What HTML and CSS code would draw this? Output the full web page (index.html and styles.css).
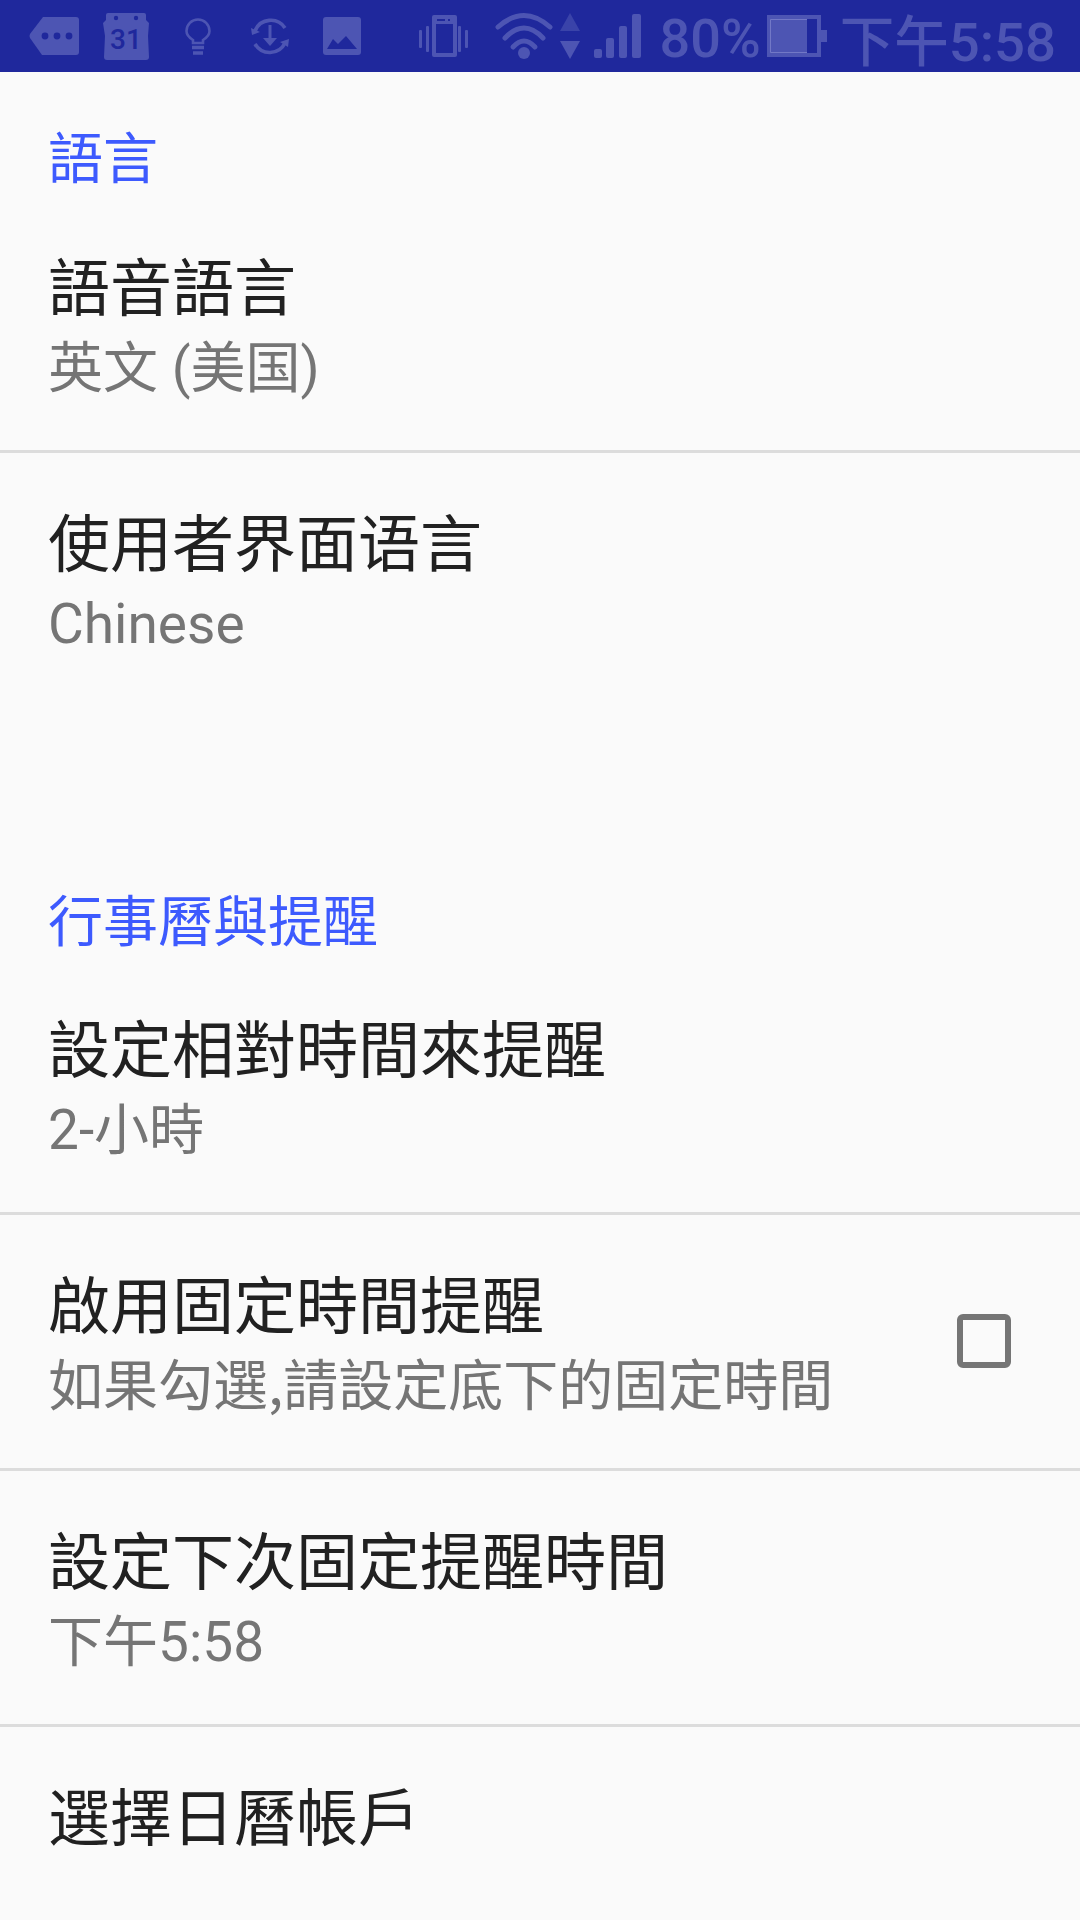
FILE: index.html
```html
<!DOCTYPE html>
<html lang="zh">
<head>
    <meta charset="UTF-8">
    <title>設定</title>
    <link rel="stylesheet" href="styles.css">
</head>
<body>

<div class="statusbar">
    <div class="notify-icons">
        <span class="cell">
            <svg width="50" height="38" viewBox="0 0 50 38"><path d="M14 0h33a3 3 0 0 1 3 3v32a3 3 0 0 1-3 3H13L1 21q-1-2 0-4z" fill="#4d55b3"/><circle cx="16" cy="19" r="3.4" fill="#1f289c"/><circle cx="28" cy="19" r="3.4" fill="#1f289c"/><circle cx="40" cy="19" r="3.4" fill="#1f289c"/></svg>
        </span>
        <span class="cell">
            <span class="calendar">
                <svg width="46" height="47" viewBox="0 0 46 47"><path d="M3 2q0-2 2-2h36q2 0 2 2v5l3 3-1 13 1 21q0 3-3 3H4q-3 0-3-3l1-21L0 10l3-3z" fill="#4d55b3"/><circle cx="13" cy="5" r="2.2" fill="#1f289c"/><circle cx="33" cy="5" r="2.2" fill="#1f289c"/></svg>
                <span class="cal-day">31</span>
            </span>
        </span>
        <span class="cell">
            <svg width="26" height="37" viewBox="0 0 26 37" fill="none" stroke="#4d55b3" stroke-width="2.6"><path d="M8 25v-3C3 19 1.500 16.500 1.500 13a11.500 11.500 0 0 1 23 0c0 3.500-1.500 6-6.500 9v3z"/><path d="M7 29.500h12M8 35h10" stroke-width="3.4"/></svg>
        </span>
        <span class="cell">
            <svg width="38" height="38" viewBox="0 0 38 38" fill="none" stroke="#4d55b3" stroke-width="3.6"><path d="M4 14A17 17 0 0 1 34 11"/><path d="M34 26A17 17 0 0 1 4 27"/><path d="M0 11l1 7 8-3z" fill="#4d55b3" stroke="none"/><path d="M38 22l-1 8-8-5z" fill="#4d55b3" stroke="none"/><path d="M19 8v14" stroke-width="3"/><path d="M12 21h14l-7 8z" fill="#4d55b3" stroke="none"/></svg>
        </span>
        <span class="cell">
            <svg width="38" height="38" viewBox="0 0 38 38"><rect width="38" height="38" rx="3" fill="#4d55b3"/><path d="M4 32l6-10 5 5 8-8 11 13z" fill="#1f289c"/></svg>
        </span>
    </div>
    <div class="system-icons">
        <svg width="49" height="42" viewBox="0 0 49 42" fill="#4d55b3"><rect x="13" width="25" height="42" rx="2"/><rect x="17" y="9" width="17" height="29" fill="#1f289c"/><rect x="18" y="4" width="8" height="2" fill="#1f289c"/><rect x="29" y="4" width="2" height="2" fill="#1f289c"/><rect x="7" y="11" width="3" height="26" rx="1"/><rect x="39" y="11" width="3" height="26" rx="1"/><rect y="15" width="3" height="18" rx="1"/><rect x="46" y="15" width="3" height="18" rx="1"/></svg>
        <svg class="i-wifi" width="58" height="48" viewBox="0 0 58 48" fill="none" stroke="#4d55b3" stroke-width="5" stroke-linecap="round"><path d="M3 15Q29-8 55 15"/><path d="M10 26Q29 6 48 26"/><path d="M18 35Q29 23 40 35"/><circle cx="29" cy="41" r="6" fill="#4d55b3" stroke="none"/></svg>
        <svg class="i-arrows" width="20" height="46" viewBox="0 0 20 46"><path d="M10 0l10 18H0z" fill="#3a43a9"/><path d="M0 28h20L10 46z" fill="#4d55b3"/></svg>
        <svg class="i-signal" width="47" height="44" viewBox="0 0 47 44" fill="#4d55b3"><rect y="35" width="8" height="9" rx="2"/><rect x="12" y="24" width="8" height="20" rx="2"/><rect x="25" y="12" width="8" height="32" rx="2"/><rect x="38" y="0" width="9" height="44" rx="2"/></svg>
        <span class="battery-pct">80%</span>
        <svg class="i-battery" width="60" height="42" viewBox="0 0 60 42"><path d="M0 0h54v15h6v12h-6v15H0z" fill="#4d55b3"/><rect x="40" y="4" width="10" height="34" fill="#1f289c"/><path d="M40 4.500H3.500v33H40" fill="none" stroke="#7278c6"/></svg>
        <span class="clock">下午5:58</span>
    </div>
</div>

<div class="section-title first">語言</div>
<div class="row line">
    <div class="row-text">
        <div class="row-name">語音語言</div>
        <div class="row-sub">英文 (美国)</div>
    </div>
</div>
<div class="row">
    <div class="row-text">
        <div class="row-name">使用者界面语言</div>
        <div class="row-sub">Chinese</div>
    </div>
</div>

<div class="section-title">行事曆與提醒</div>
<div class="row line">
    <div class="row-text">
        <div class="row-name">設定相對時間來提醒</div>
        <div class="row-sub">2-小時</div>
    </div>
</div>
<div class="row line">
    <div class="row-text">
        <div class="row-name">啟用固定時間提醒</div>
        <div class="row-sub cjk">如果勾選,請設定底下的固定時間</div>
    </div>
    <span class="checkbox"></span>
</div>
<div class="row line">
    <div class="row-text">
        <div class="row-name">設定下次固定提醒時間</div>
        <div class="row-sub">下午5:58</div>
    </div>
</div>
<div class="row">
    <div class="row-text">
        <div class="row-name">選擇日曆帳戶</div>
    </div>
</div>

</body>
</html>
```

FILE: styles.css
```css
html, body {
    margin: 0;
    padding: 0;
    height: 1920px;
    overflow: hidden;
}
body {
    background-color: #fafafa;
    font-family: Roboto, "Noto Sans CJK SC", sans-serif;
}

.statusbar {
    display: flex;
    justify-content: space-between;
    align-items: center;
    height: 72px;
    padding-left: 18px;
    padding-right: 24px;
    background-color: #1f289c;
    color: #4d55b3;
}
.notify-icons {
    display: flex;
    align-items: center;
}
.cell {
    display: flex;
    justify-content: center;
    align-items: center;
    width: 72px;
    height: 72px;
}
.calendar {
    display: block;
    width: 46px;
    height: 47px;
    position: relative;
}
.cal-day {
    position: absolute;
    left: 0;
    right: 0;
    top: 13px;
    text-align: center;
    font-size: 28px;
    line-height: 28px;
    font-weight: 500;
    color: #1f289c;
}
.system-icons {
    display: flex;
    align-items: center;
}
.i-wifi {
    margin-left: 27px;
}
.i-arrows {
    margin-left: 7px;
}
.i-signal {
    margin-left: 14px;
}
.battery-pct {
    margin-left: 19px;
    margin-top: 4px;
    font-size: 54px;
    font-weight: 500;
}
.i-battery {
    margin-left: 6px;
}
.clock {
    margin-left: 13px;
    margin-top: 3px;
    font-size: 54.5px;
    font-weight: 500;
}

.section-title {
    height: 250px;
    padding: 181px 48px 0;
    box-sizing: border-box;
    font-size: 55px;
    line-height: 64px;
    color: #3d5afe;
}
.section-title.first {
    height: 125px;
    padding-top: 55px;
}

.row {
    display: flex;
    align-items: flex-start;
    justify-content: space-between;
    box-sizing: border-box;
    height: 256px;
    padding: 55px 69px 0 48px;
}
.line {
    border-bottom: 3px solid #dcdcdc;
}
.row-name {
    font-size: 62px;
    line-height: 76px;
    color: #212121;
}
.row-sub {
    margin-top: 8px;
    font-size: 55px;
    line-height: 64px;
    color: #757575;
}
.row-sub.cjk {
    margin-top: 3px;
    font-family: "Noto Sans CJK SC", sans-serif;
}
.checkbox {
    width: 42px;
    height: 42px;
    margin-top: 44px;
    border: 6px solid #757575;
    border-radius: 6px;
}
```
